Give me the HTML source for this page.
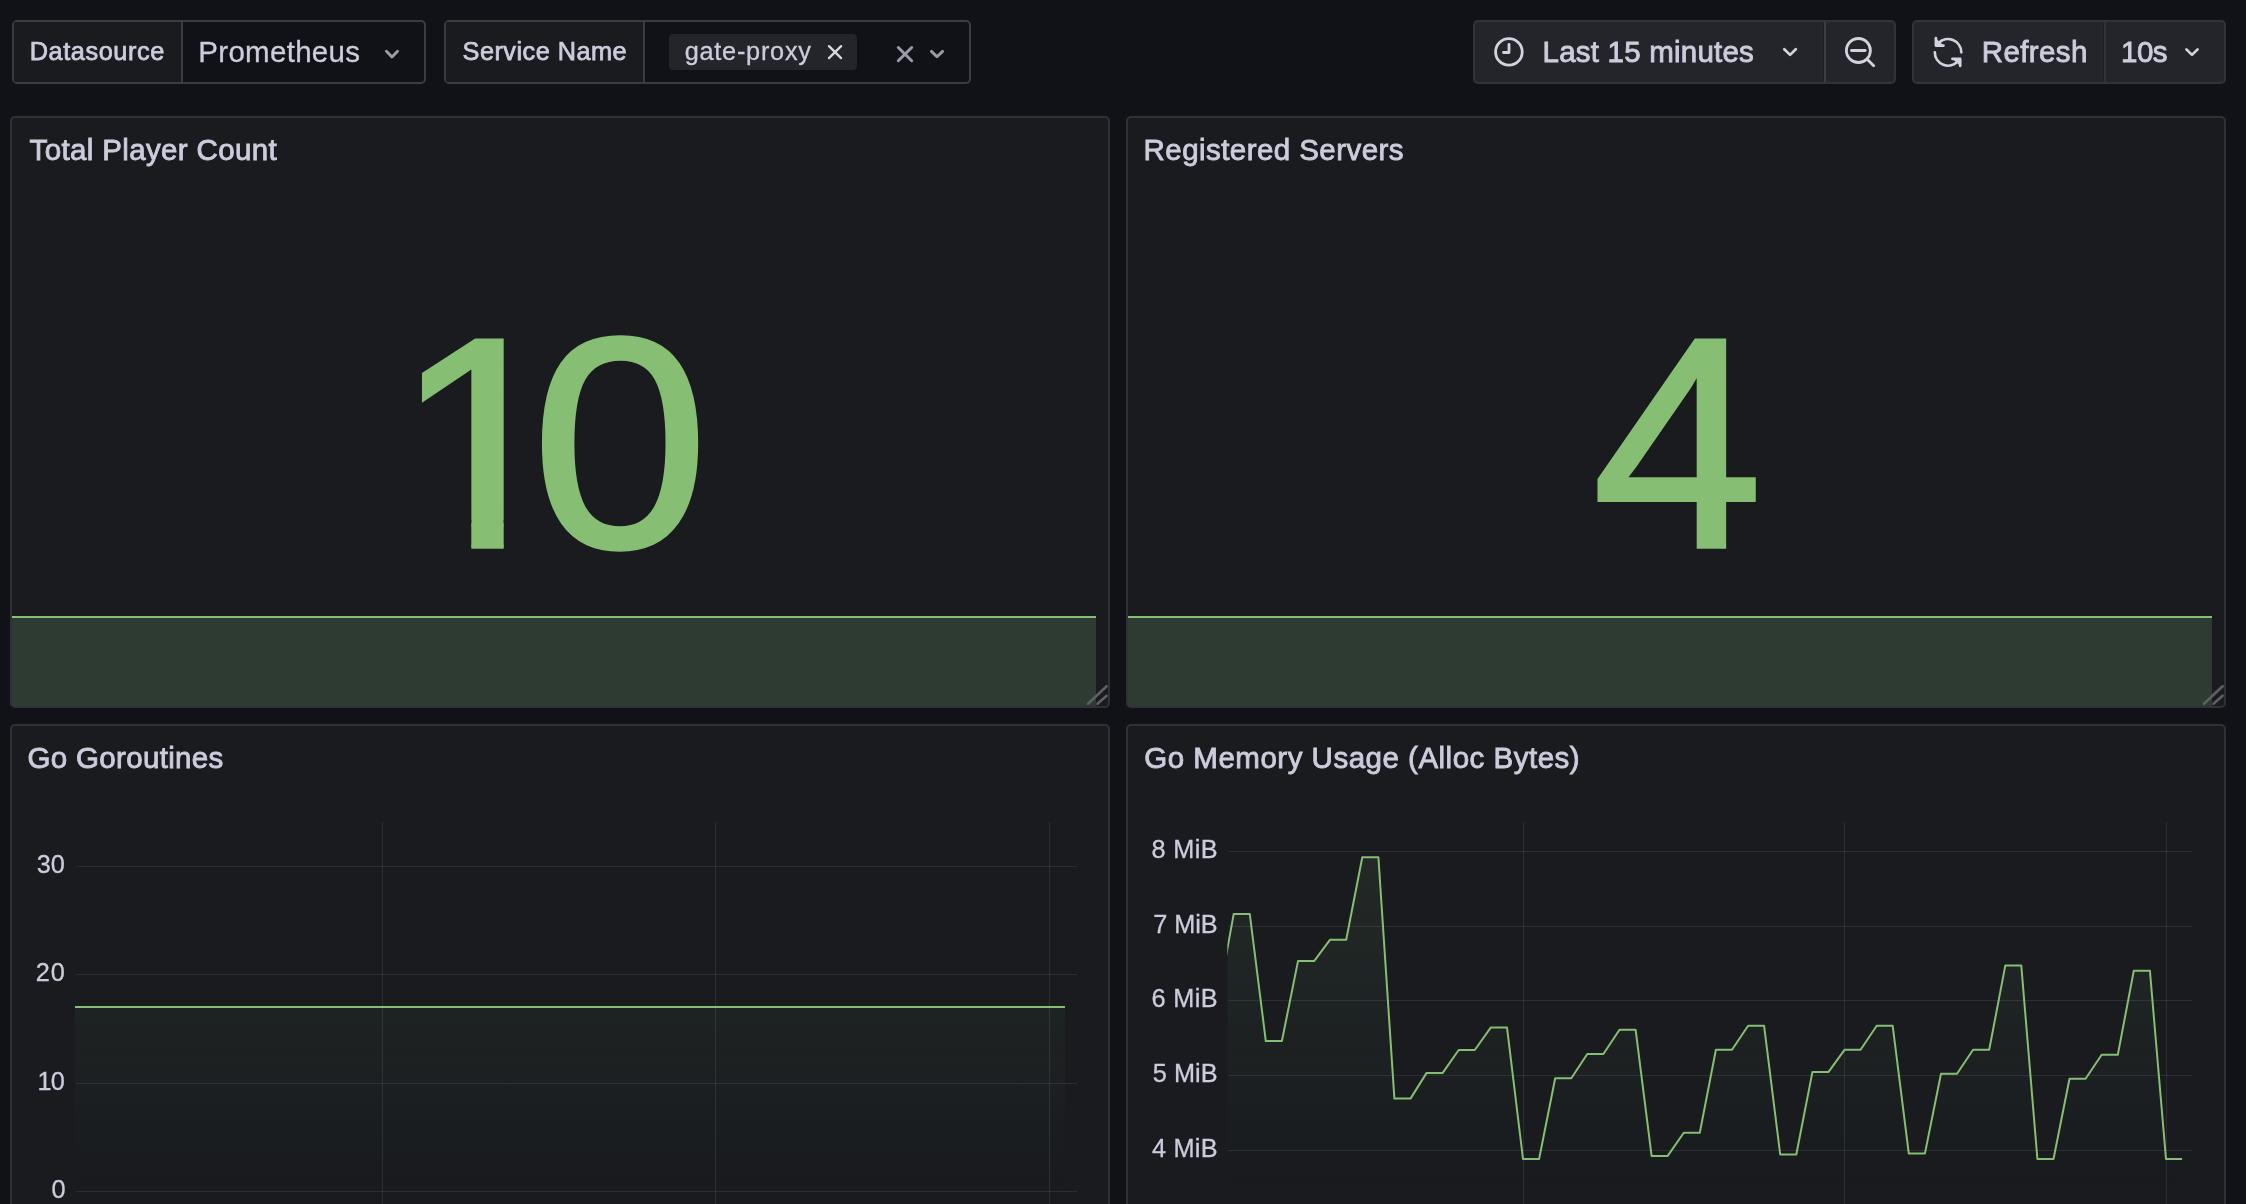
<!DOCTYPE html>
<html lang="en"><head><meta charset="utf-8"><title>Gate Proxy Dashboard</title>
<style>
html,body{margin:0;padding:0;background:#111217;}
body{width:2246px;height:1204px;overflow:hidden;position:relative;font-family:"Liberation Sans", sans-serif;color:#ccccdc}
.b{position:absolute;box-sizing:border-box}
.panel{background:#191b1f;border:2px solid #2f3137;border-radius:5px}
.grp{border:2px solid #3a3b43;border-radius:5px;background:#111217}
.lab{background:#191b1f;border-right:2px solid #3a3b43;top:0;bottom:0;left:0}
.btn{background:#23252a;border:2px solid #323339;border-radius:5px}
.div{top:0;bottom:0;width:2px;background:#323339}
.dk{top:0;bottom:0;width:1.5px;background:#1d1f24}
.chip{background:#23252a;border-radius:4px}
</style></head><body>
<div class="b grp" style="left:12px;top:20px;width:414px;height:64px"><div class="b lab" style="width:169px;height:60px"></div></div>
<div class="b grp" style="left:444px;top:20px;width:527px;height:64px"><div class="b lab" style="width:199px;height:60px"></div></div>
<div class="b chip" style="left:669px;top:34px;width:188px;height:36px"></div>
<div class="b btn" style="left:1473px;top:20px;width:423px;height:64px"><div class="b dk" style="left:347.5px;height:60px"></div><div class="b div" style="left:349px;height:60px;background:#3d3e44"></div></div>
<div class="b btn" style="left:1912px;top:20px;width:314px;height:64px"><div class="b dk" style="left:188.5px;height:60px"></div><div class="b div" style="left:190px;height:60px"></div></div>
<div class="b panel" style="left:10px;top:116px;width:1100px;height:592px"></div>
<div class="b panel" style="left:1126px;top:116px;width:1100px;height:592px"></div>
<div class="b panel" style="left:10px;top:724px;width:1100px;height:600px"></div>
<div class="b panel" style="left:1126px;top:724px;width:1100px;height:600px"></div>
<svg width="2246" height="1204" viewBox="0 0 2246 1204" style="position:absolute;left:0;top:0;will-change:transform;font-family:'Liberation Sans',sans-serif">
<defs>
<linearGradient id="gfill" gradientUnits="userSpaceOnUse" x1="0" y1="822.5" x2="0" y2="1192"><stop offset="0" stop-color="#86be73" stop-opacity="0.1"/><stop offset="1" stop-color="#86be73" stop-opacity="0"/></linearGradient>
<clipPath id="c3"><rect x="75.5" y="822" width="1002" height="382"/></clipPath>
<clipPath id="c4"><rect x="1227.3" y="822" width="965" height="370"/></clipPath>
</defs>
<rect x="12" y="617" width="1084" height="89" fill="#2e3b32"/>
<rect x="12" y="616" width="1084" height="2" fill="#86be73"/>
<rect x="1128" y="617" width="1084" height="89" fill="#2e3b32"/>
<rect x="1128" y="616" width="1084" height="2" fill="#86be73"/>
<g stroke="#5d5f65" stroke-width="2.6" stroke-linecap="round"><line x1="1088" y1="703.8" x2="1106.6" y2="686.2"/><line x1="1097.5" y1="703.8" x2="1106.6" y2="695.8"/></g>
<g stroke="#5d5f65" stroke-width="2.6" stroke-linecap="round"><line x1="2204" y1="703.8" x2="2222.6" y2="686.2"/><line x1="2213.5" y1="703.8" x2="2222.6" y2="695.8"/></g>
<clipPath id="cone"><path clip-rule="evenodd" d="M300 250H800V600H300Z M400 520H471.3V560H400Z M503.7 520H558V560H503.7Z"/></clipPath>
<g clip-path="url(#cone)"><text transform="translate(393.5,546.8) scale(1.06,1)" x="0 130.3" y="0" style="font-size:300px;fill:#86be73;stroke:#86be73;stroke-width:4px;paint-order:stroke;stroke-linejoin:miter">10</text></g>
<text transform="translate(1592.5,546.8) scale(1.02,1)" x="0" y="0" style="font-size:300px;fill:#86be73;stroke:#86be73;stroke-width:4px;paint-order:stroke;stroke-linejoin:miter">4</text>
<rect x="76" y="866" width="1001" height="1" fill="rgba(240,250,255,0.085)"/>
<rect x="76" y="974" width="1001" height="1" fill="rgba(240,250,255,0.085)"/>
<rect x="76" y="1083" width="1001" height="1" fill="rgba(240,250,255,0.085)"/>
<rect x="76" y="1191" width="1001" height="1" fill="rgba(240,250,255,0.085)"/>
<rect x="382" y="822" width="1" height="382" fill="rgba(240,250,255,0.085)"/>
<rect x="715" y="822" width="1" height="382" fill="rgba(240,250,255,0.085)"/>
<rect x="1049" y="822" width="1" height="382" fill="rgba(240,250,255,0.085)"/>
<rect x="75" y="1007" width="990" height="185" fill="url(#gfill)"/>
<rect x="75" y="1006" width="990" height="2" fill="#86be73"/>
<text x="36.75" y="873.1" text-anchor="start" style="font-size:25.3px;letter-spacing:0.031px;fill:#ccccdc;font-weight:400;stroke:#ccccdc;stroke-width:0.3px;">30</text>
<text x="35.75" y="981.2" text-anchor="start" style="font-size:25.3px;letter-spacing:1.031px;fill:#ccccdc;font-weight:400;stroke:#ccccdc;stroke-width:0.3px;">20</text>
<text x="37.38" y="1089.7" text-anchor="start" style="font-size:25.3px;letter-spacing:-0.6px;fill:#ccccdc;font-weight:400;stroke:#ccccdc;stroke-width:0.3px;">10</text>
<text x="51.55" y="1198.4" text-anchor="start" style="font-size:25.3px;letter-spacing:0px;fill:#ccccdc;font-weight:400;stroke:#ccccdc;stroke-width:0.3px;">0</text>
<rect x="1228" y="851" width="964" height="1" fill="rgba(240,250,255,0.085)"/>
<rect x="1228" y="926" width="964" height="1" fill="rgba(240,250,255,0.085)"/>
<rect x="1228" y="1000" width="964" height="1" fill="rgba(240,250,255,0.085)"/>
<rect x="1228" y="1075" width="964" height="1" fill="rgba(240,250,255,0.085)"/>
<rect x="1228" y="1150" width="964" height="1" fill="rgba(240,250,255,0.085)"/>
<rect x="1523" y="822" width="1" height="382" fill="rgba(240,250,255,0.085)"/>
<rect x="1844" y="822" width="1" height="382" fill="rgba(240,250,255,0.085)"/>
<rect x="2166" y="822" width="1" height="382" fill="rgba(240,250,255,0.085)"/>
<g clip-path="url(#c4)"><polygon points="1218.0,1204 1218.0,1000.0 1233.7,914.0 1249.8,914.0 1265.8,1041.0 1281.9,1041.0 1298.0,961.1 1314.1,961.1 1330.1,939.7 1346.2,939.7 1362.3,857.2 1378.4,857.2 1394.4,1098.6 1410.5,1098.6 1426.6,1072.9 1442.7,1072.9 1458.7,1050.0 1474.8,1050.0 1490.9,1027.4 1507.0,1027.4 1523.0,1159.0 1539.1,1159.0 1555.2,1078.3 1571.3,1078.3 1587.3,1054.0 1603.4,1054.0 1619.5,1029.7 1635.6,1029.7 1651.6,1155.9 1667.7,1155.9 1683.8,1132.7 1699.8,1132.7 1715.9,1049.8 1732.0,1049.8 1748.1,1025.8 1764.1,1025.8 1780.2,1154.5 1796.3,1154.5 1812.4,1072.1 1828.4,1072.1 1844.5,1049.8 1860.6,1049.8 1876.7,1025.8 1892.7,1025.8 1908.8,1153.6 1924.9,1153.6 1941.0,1073.7 1957.0,1073.7 1973.1,1049.8 1989.2,1049.8 2005.3,965.6 2021.3,965.6 2037.4,1159.0 2053.5,1159.0 2069.5,1078.8 2085.6,1078.8 2101.7,1054.8 2117.8,1054.8 2133.8,970.7 2149.9,970.7 2166.0,1159.0 2182.1,1159.0 2182.1,1204" fill="url(#gfill)"/><polyline points="1218.0,1000.0 1233.7,914.0 1249.8,914.0 1265.8,1041.0 1281.9,1041.0 1298.0,961.1 1314.1,961.1 1330.1,939.7 1346.2,939.7 1362.3,857.2 1378.4,857.2 1394.4,1098.6 1410.5,1098.6 1426.6,1072.9 1442.7,1072.9 1458.7,1050.0 1474.8,1050.0 1490.9,1027.4 1507.0,1027.4 1523.0,1159.0 1539.1,1159.0 1555.2,1078.3 1571.3,1078.3 1587.3,1054.0 1603.4,1054.0 1619.5,1029.7 1635.6,1029.7 1651.6,1155.9 1667.7,1155.9 1683.8,1132.7 1699.8,1132.7 1715.9,1049.8 1732.0,1049.8 1748.1,1025.8 1764.1,1025.8 1780.2,1154.5 1796.3,1154.5 1812.4,1072.1 1828.4,1072.1 1844.5,1049.8 1860.6,1049.8 1876.7,1025.8 1892.7,1025.8 1908.8,1153.6 1924.9,1153.6 1941.0,1073.7 1957.0,1073.7 1973.1,1049.8 1989.2,1049.8 2005.3,965.6 2021.3,965.6 2037.4,1159.0 2053.5,1159.0 2069.5,1078.8 2085.6,1078.8 2101.7,1054.8 2117.8,1054.8 2133.8,970.7 2149.9,970.7 2166.0,1159.0 2182.1,1159.0" fill="none" stroke="#86be73" stroke-width="2" stroke-linejoin="round"/></g>
<text x="1151.55" y="858.0" text-anchor="start" style="font-size:25.3px;letter-spacing:0.328px;fill:#ccccdc;font-weight:400;stroke:#ccccdc;stroke-width:0.3px;">8 MiB</text>
<text x="1153.25" y="932.8" text-anchor="start" style="font-size:25.3px;letter-spacing:-0.097px;fill:#ccccdc;font-weight:400;stroke:#ccccdc;stroke-width:0.3px;">7 MiB</text>
<text x="1151.55" y="1007.0" text-anchor="start" style="font-size:25.3px;letter-spacing:0.328px;fill:#ccccdc;font-weight:400;stroke:#ccccdc;stroke-width:0.3px;">6 MiB</text>
<text x="1152.75" y="1081.7" text-anchor="start" style="font-size:25.3px;letter-spacing:0.028px;fill:#ccccdc;font-weight:400;stroke:#ccccdc;stroke-width:0.3px;">5 MiB</text>
<text x="1152.05" y="1156.9" text-anchor="start" style="font-size:25.3px;letter-spacing:0.203px;fill:#ccccdc;font-weight:400;stroke:#ccccdc;stroke-width:0.3px;">4 MiB</text>
<text x="29.62" y="159.8" text-anchor="start" style="font-size:29.5px;letter-spacing:0.359px;fill:#ccccdc;font-weight:400;stroke:#ccccdc;stroke-width:0.85px;">Total Player Count</text>
<text x="1143.62" y="159.8" text-anchor="start" style="font-size:29.5px;letter-spacing:0.436px;fill:#ccccdc;font-weight:400;stroke:#ccccdc;stroke-width:0.85px;">Registered Servers</text>
<text x="27.53" y="768.1" text-anchor="start" style="font-size:29.5px;letter-spacing:0.329px;fill:#ccccdc;font-weight:400;stroke:#ccccdc;stroke-width:0.85px;">Go Goroutines</text>
<text x="1144.33" y="768.1" text-anchor="start" style="font-size:29.5px;letter-spacing:0.499px;fill:#ccccdc;font-weight:400;stroke:#ccccdc;stroke-width:0.85px;">Go Memory Usage (Alloc Bytes)</text>
<text x="29.68" y="60.3" text-anchor="start" style="font-size:25.3px;letter-spacing:0.584px;fill:#ccccdc;font-weight:400;stroke:#ccccdc;stroke-width:0.75px;">Datasource</text>
<text x="198.35" y="62" text-anchor="start" style="font-size:29.5px;letter-spacing:0.289px;fill:#ccccdc;font-weight:400;stroke:#ccccdc;stroke-width:0.3px;">Prometheus</text>
<text x="462.57" y="60.3" text-anchor="start" style="font-size:25.3px;letter-spacing:0.478px;fill:#ccccdc;font-weight:400;stroke:#ccccdc;stroke-width:0.75px;">Service Name</text>
<text x="684.65" y="60.3" text-anchor="start" style="font-size:25.3px;letter-spacing:0.759px;fill:#ccccdc;font-weight:400;stroke:#ccccdc;stroke-width:0.3px;">gate-proxy</text>
<text x="1542.62" y="62.1" text-anchor="start" style="font-size:29.5px;letter-spacing:0.21px;fill:#ccccdc;font-weight:400;stroke:#ccccdc;stroke-width:0.85px;">Last 15 minutes</text>
<text x="1981.72" y="62.1" text-anchor="start" style="font-size:29.5px;letter-spacing:0.394px;fill:#ccccdc;font-weight:400;stroke:#ccccdc;stroke-width:0.85px;">Refresh</text>
<text x="2121.12" y="62.1" text-anchor="start" style="font-size:29.5px;letter-spacing:-0.581px;fill:#ccccdc;font-weight:400;stroke:#ccccdc;stroke-width:0.85px;">10s</text>
<polyline points="386.4,51.2 392.0,57.0 397.6,51.2" fill="none" stroke="#9b9ba8" stroke-width="2.9" stroke-linecap="round" stroke-linejoin="round"/>
<polyline points="931.4,51.4 937.0,56.8 942.6,51.4" fill="none" stroke="#9b9ba8" stroke-width="2.9" stroke-linecap="round" stroke-linejoin="round"/>
<polyline points="1784.3,49.3 1790.05,54.9 1795.8,49.3" fill="none" stroke="#d2d2e0" stroke-width="2.7" stroke-linecap="round" stroke-linejoin="round"/>
<polyline points="2186.4,49.4 2192.0,54.9 2197.6,49.4" fill="none" stroke="#d2d2e0" stroke-width="2.7" stroke-linecap="round" stroke-linejoin="round"/>
<g stroke="#d8d8e6" stroke-width="2.3" stroke-linecap="round"><line x1="829.0" y1="46.1" x2="841.1" y2="58.1"/><line x1="829.0" y1="58.1" x2="841.1" y2="46.1"/></g>
<g stroke="#9b9ba8" stroke-width="3.0" stroke-linecap="round"><line x1="898.3" y1="47.5" x2="911.7" y2="60.7"/><line x1="898.3" y1="60.7" x2="911.7" y2="47.5"/></g>
<g fill="none" stroke="#d2d2e0" stroke-width="2.8" stroke-linecap="round" stroke-linejoin="round"><circle cx="1508.9" cy="51.9" r="13.3"/><polyline points="1509,44.5 1509,52.5 1503.5,52.5"/></g>
<g fill="none" stroke="#d2d2e0" stroke-width="2.8" stroke-linecap="round"><circle cx="1858.4" cy="50.5" r="12"/><line x1="1867.2" y1="59.3" x2="1873.7" y2="65.8"/><line x1="1851.5" y1="50.5" x2="1865.2" y2="50.5"/></g>
<g fill="none" stroke="#d2d2e0" stroke-width="2.7" stroke-linecap="round" stroke-linejoin="round">
<path d="M1938.4 43.2 A13.3 13.3 0 0 1 1961.3 52.3"/><path d="M1934.8 52.3 A13.3 13.3 0 0 0 1958 61.2"/>
<polyline points="1935.9,38.2 1935.9,45.6 1943.5,45.6" fill="#d2d2e0"/><polyline points="1952.4,58.8 1960.2,58.8 1960.2,66" fill="#d2d2e0"/></g>
</svg>
</body></html>
